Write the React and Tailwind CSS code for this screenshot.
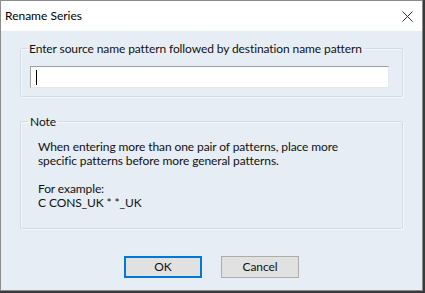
export default function App() {
  const font = { fontFamily: 'Lato, "Noto Sans", sans-serif' };
  return (
    <div className="w-[425px] h-[293px] bg-[#3a3a3a] overflow-hidden" style={font}>
      <div className="w-[423px] h-[291px] border border-[#8c8c8c] bg-[#e6edf5] flex flex-col">
        <div className="h-[30px] bg-white flex items-center justify-between pl-[4px] pr-[9px] shrink-0">
          <span className="text-[12px] text-black whitespace-nowrap">Rename Series</span>
          <svg width="11" height="11" viewBox="0 0 11 11">
            <path d="M0.5 0.5 L10.5 10.5 M10.5 0.5 L0.5 10.5" stroke="#2b2b2b" strokeWidth="1" fill="none" />
          </svg>
        </div>
        <div className="flex-1 flex flex-col pl-[19px] pt-[10px] text-[12px] text-[#111] tracking-[-0.1px]">
          <fieldset className="w-[383px] border border-[#d3dbe3] shadow-[inset_1px_1px_0_#f4f7fa,1px_1px_0_#f4f7fa] rounded-[2px] pl-[9px] pr-[13px] pb-[8px] pt-[10px] m-0 min-w-0">
            <legend className="px-[2px] ml-[-3px] leading-[15px] whitespace-nowrap">Enter source name pattern followed by destination name pattern</legend>
            <div className="h-[22px] bg-white border border-[#a0a0a0] border-r-[#e3e9ef] border-b-[#e3e9ef] flex items-center pl-[5px]">
              <div className="w-[1px] h-[15px] bg-black" />
            </div>
          </fieldset>
          <fieldset className="w-[383px] border border-[#d3dbe3] shadow-[inset_1px_1px_0_#f4f7fa,1px_1px_0_#f4f7fa] rounded-[2px] pl-[17px] pr-[10px] pt-[11px] pb-[18px] mt-[17px] m-0 min-w-0">
            <legend className="px-[2px] ml-[-10px] leading-[15px]">Note</legend>
            <div className="leading-[14px] whitespace-nowrap">
              <div>When entering more than one pair of patterns, place more</div>
              <div>specific patterns before more general patterns.</div>
              <div className="h-[14px]" />
              <div>For example:</div>
              <div>C CONS_UK * *_UK</div>
            </div>
          </fieldset>
          <div className="flex gap-[19px] mt-[27px] ml-[104px]">
            <button className="w-[78px] h-[22px] bg-[#e1e1e1] border-2 border-[#0078d7] text-[12px] flex items-center justify-center">OK</button>
            <button className="w-[78px] h-[22px] bg-[#e1e1e1] border border-[#adadad] text-[12px] flex items-center justify-center">Cancel</button>
          </div>
        </div>
      </div>
    </div>
  );
}
